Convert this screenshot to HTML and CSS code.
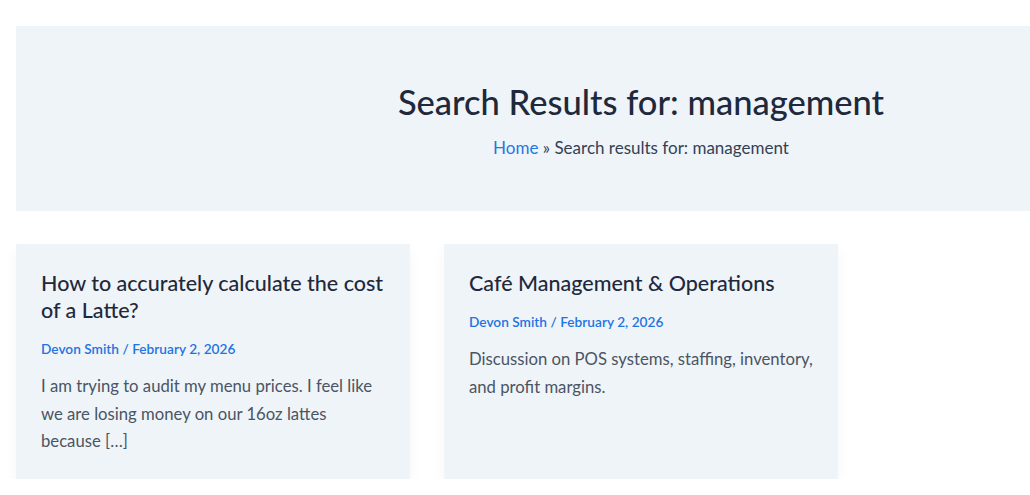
FILE: index.html
```html
<!DOCTYPE html>
<html lang="en">
<head>
<meta charset="utf-8">
<title>Search Results for: management</title>
<link rel="stylesheet" href="styles.css">
</head>
<body>
<div class="page">
  <header class="hero">
    <h1 class="hero-title">Search Results for: management</h1>
    <nav class="crumbs"><a href="#" class="crumb-link">Home</a> <span class="sep">»</span> Search results for: management</nav>
  </header>
  <main class="results">
    <article class="card">
      <h2 class="card-title">How to accurately calculate the cost of a Latte?</h2>
      <div class="meta">Devon Smith / February 2, 2026</div>
      <p class="excerpt">I am trying to audit my menu prices. I feel like we are losing money on our 16oz lattes because […]</p>
    </article>
    <article class="card">
      <h2 class="card-title">Café Management &amp; Operations</h2>
      <div class="meta">Devon Smith / February 2, 2026</div>
      <p class="excerpt">Discussion on POS systems, staffing, inventory, and profit margins.</p>
    </article>
  </main>
</div>
</body>
</html>
```
FILE: styles.css
```css
html, body {
  margin: 0;
  padding: 0;
  background: #ffffff;
  overflow: hidden;
}
body {
  font-family: "Lato", "Noto Sans", sans-serif;
  color: #1e293b;
}
.page {
  width: 1250px;
  padding: 26px 0 0 16px;
}
.hero {
  background: #eff4f9;
  height: 185px;
  box-sizing: border-box;
  padding-top: 3px;
  display: flex;
  flex-direction: column;
  align-items: center;
  justify-content: center;
}
.hero-title {
  margin: 0;
  font-size: 34.5px;
  font-weight: 500;
  line-height: 44px;
  color: #1e293b;
}
.crumbs {
  margin-top: 12px;
  font-size: 17px;
  line-height: 24px;
  color: #334155;
}
.crumb-link {
  color: #2478e0;
  text-decoration: none;
}
.results {
  margin-top: 33px;
  display: grid;
  grid-template-columns: repeat(3, 394px);
  column-gap: 34px;
}
.card {
  background: #eff4f9;
  padding: 26px 20px 23px 25px;
  box-shadow: 0 6px 14px rgba(15, 23, 42, 0.04);
}
.card-title {
  margin: 0;
  font-size: 21.5px;
  font-weight: 500;
  line-height: 27px;
  color: #1e293b;
}
.meta {
  margin-top: 15px;
  font-size: 13.7px;
  font-weight: 600;
  line-height: 20px;
  color: #1f74e0;
}
.excerpt {
  margin: 14px 0 0;
  font-size: 16.7px;
  line-height: 27.5px;
  color: #4b5563;
}
```
